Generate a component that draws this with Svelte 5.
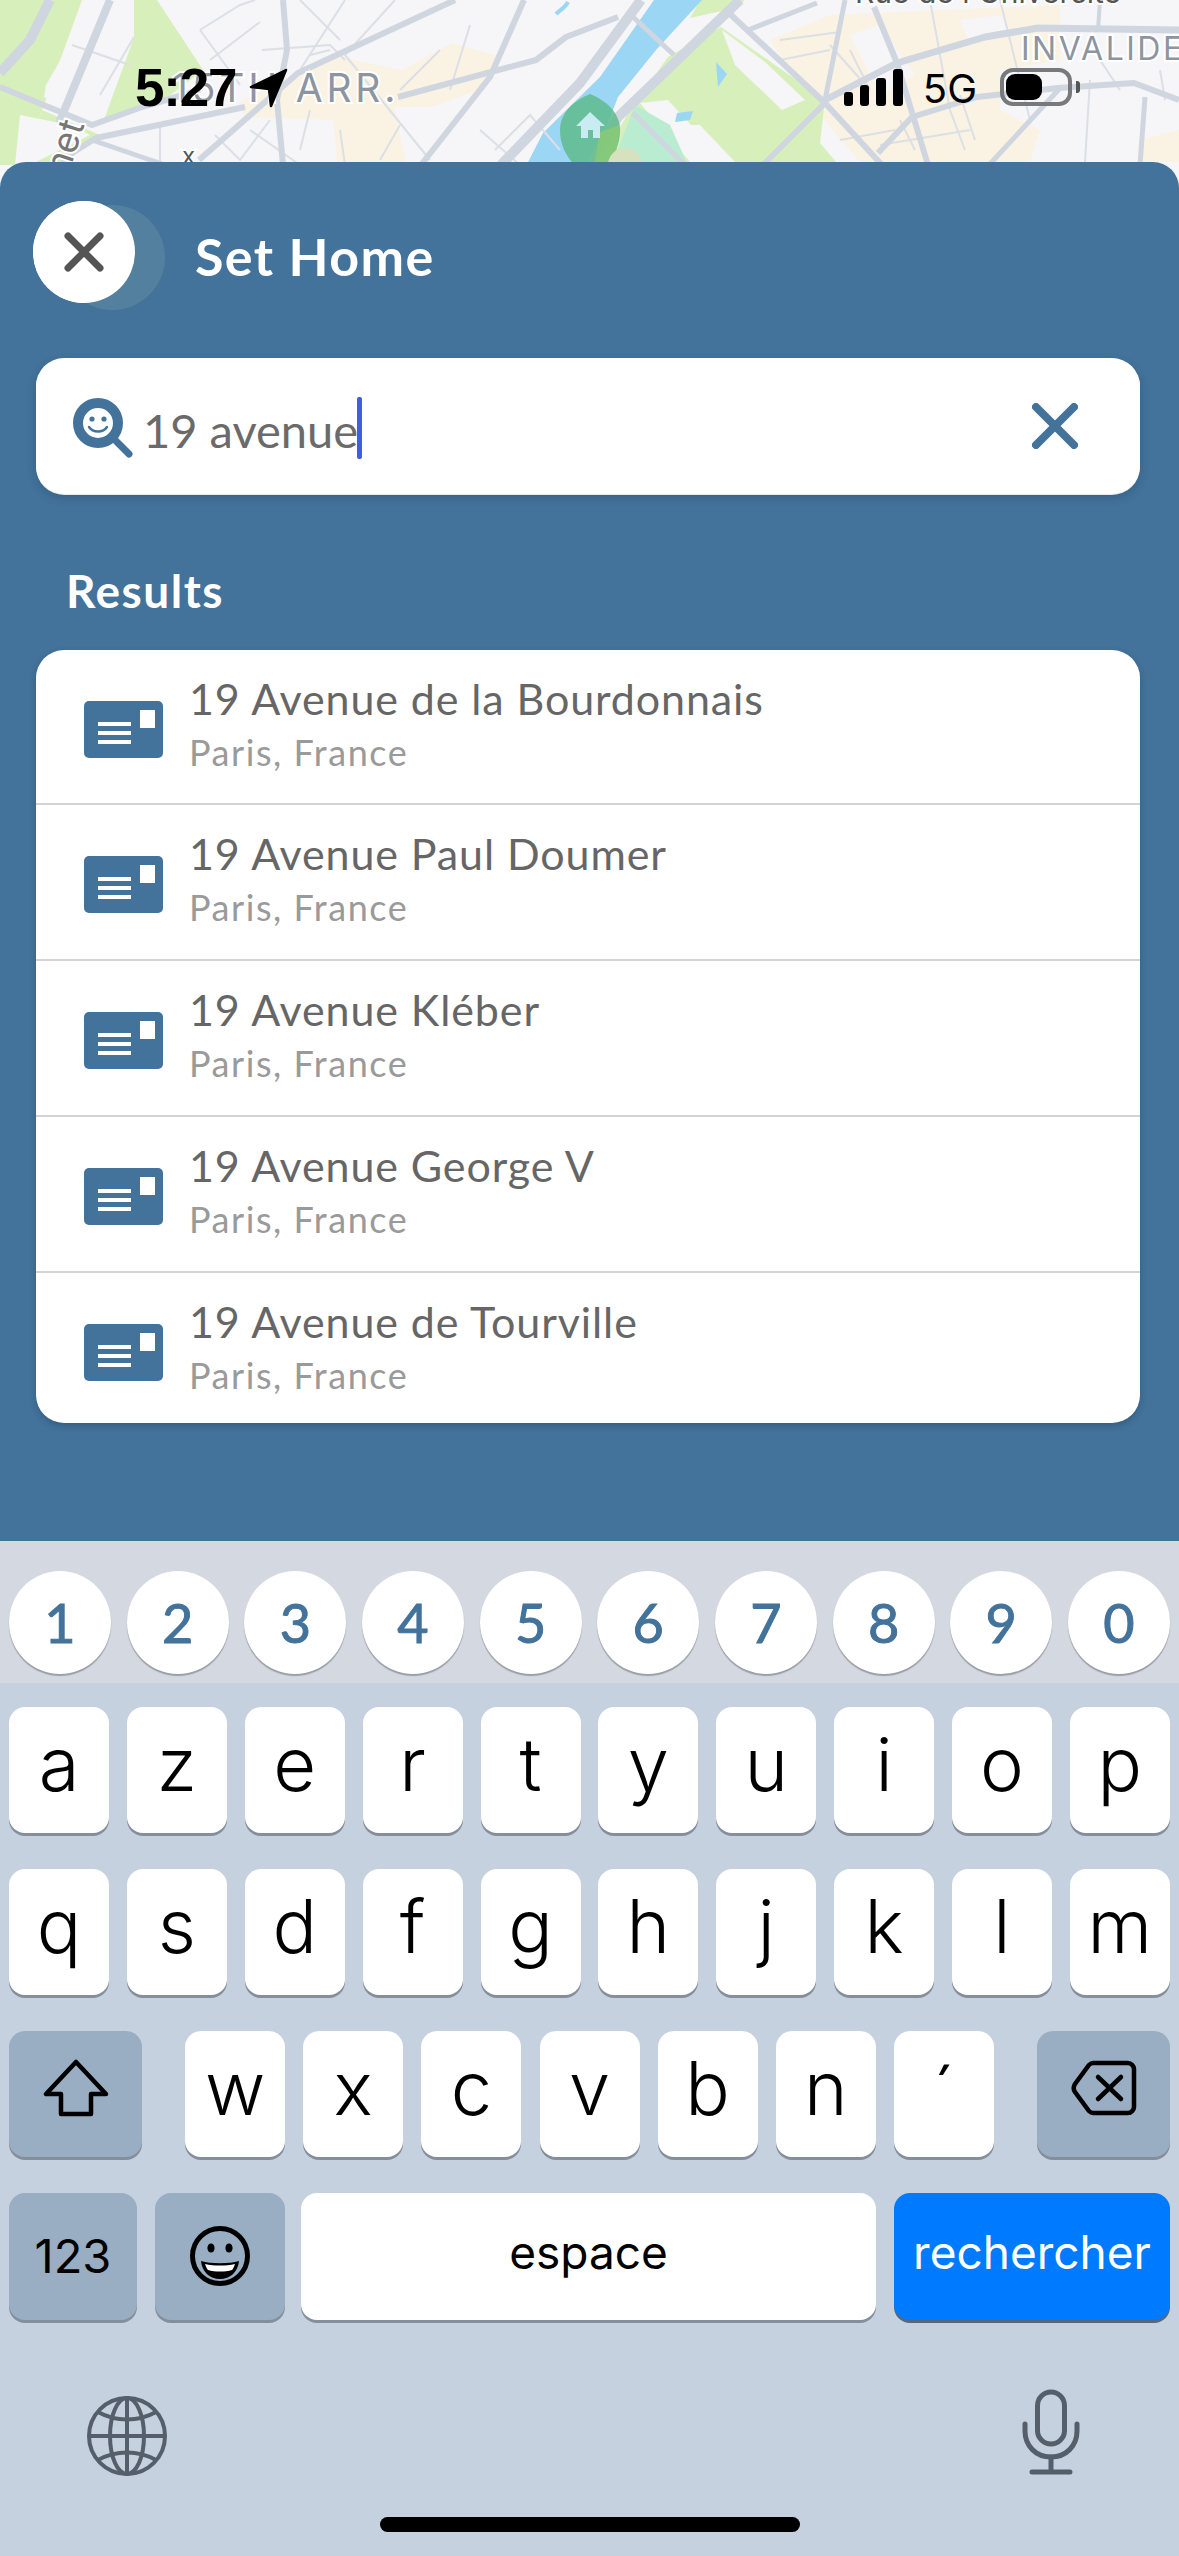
<script>
  const results = [
    '19 Avenue de la Bourdonnais',
    '19 Avenue Paul Doumer',
    '19 Avenue Kléber',
    '19 Avenue George V',
    '19 Avenue de Tourville'
  ];
  const digits = ['1','2','3','4','5','6','7','8','9','0'];
  const row1 = ['a','z','e','r','t','y','u','i','o','p'];
  const row2 = ['q','s','d','f','g','h','j','k','l','m'];
  const row3 = ['w','x','c','v','b','n'];
  const greens = [
    '0,0 82,0 42,110 20,165 0,165',
    '134,0 157,0 203,70 160,103 103,122 134,37',
    '42,110 100,135 62,165 20,165',
    '668,57 721,27 825,100 820,143 836,162 600,162 630,110',
    '700,0 745,0 735,8 690,18'
  ];
  const yellows = [
    '237,103 337,57 402,70 452,43 501,57 486,87 432,107 394,107 406,162 337,162 333,120 245,117',
    '770,40 830,15 1060,5 1060,60 1000,70 1000,110 1040,130 1030,162 860,162 820,115',
    '1140,140 1179,130 1179,162 1140,162'
  ];
  const whites = [
    '46,85 95,0 134,0 134,37 103,122 90,118 44,97',
    '722,30 765,62 805,100 782,110 735,65',
    '640,103 668,100 725,162 690,162',
    '680,125 700,125 735,162 710,162',
    '20,115 70,125 90,135 30,165 15,165',
    '850,35 880,25 915,75 880,95',
    '960,20 1000,15 1010,30 970,45'
  ];
  const majors = [
    ['M50 0L30 40L0 73', 10],
    ['M110 0L59 123', 8],
    ['M0 87L92 125L142 107L200 90', 6],
    ['M61 160L96 138L245 107', 6],
    ['M92 140L165 165', 5],
    ['M455 0L298 73L199 160', 6],
    ['M283 0L287 50L277 100L283 165', 6],
    ['M398 97L536 60L566 37L618 17', 6],
    ['M524 0L490 77L421 165', 6],
    ['M641 0L580 83L501 165', 10],
    ['M740 0L618 117L590 165', 10],
    ['M633 17L674 55', 5],
    ['M729 13L825 103L882 165', 6],
    ['M633 113L690 170', 5],
    ['M825 100L897 63L985 37L1038 28L1179 30', 7],
    ['M763 165L825 103', 6],
    ['M874 7L897 63L928 165', 6],
    ['M748 30L817 3', 5],
    ['M845 0L825 100', 5],
    ['M878 153L912 117L977 97L1058 88L1134 83L1179 100', 6],
    ['M989 165L1061 87', 5],
    ['M1145 97L1140 165', 5],
    ['M1100 0L1098 30M1205 0L1203 30', 4]
  ];
  const minors = [
    'M200 30L240 5L255 0M200 30L240 85M260 22L210 60',
    'M72 45L130 65M100 95L134 37',
    'M262 50L330 45L345 60M300 0L340 40M330 50L310 55',
    'M345 0L300 70M395 0L345 55L430 160M440 50L400 90M470 25L450 90',
    'M160 125L160 165M310 110L300 150M250 130L300 165',
    'M400 125L380 160M480 130L520 165M495 150L530 115L560 150M340 130L345 165',
    'M270 120L240 160L215 135',
    'M850 50L870 90L830 45M780 40L840 32M780 60L830 50',
    'M930 0L950 110L965 150M1000 0L1030 120M900 120L915 150M960 95L975 140',
    'M1090 80L1085 162M1100 60L1120 90M1160 70L1165 100',
    'M840 140L895 130M880 145L970 130'
  ];
</script>

<div class="screen">
  <svg class="map" viewBox="0 0 1179 170" width="1179" height="170" aria-hidden="true">
    <rect width="1179" height="170" fill="#f6f5f7" />
    {#each yellows as p}<polygon points={p} fill="#faf3e3" />{/each}
    {#each greens as p}<polygon points={p} fill="#d7f0bb" />{/each}
    {#each whites as p}<polygon points={p} fill="#f6f5f7" />{/each}
    <polygon points="654,0 702,0 656,50 618,97 590,170 524,170 543,133 600,77" fill="#9bd6f5" />
    <polygon points="635,105 670,125 690,170 610,170" fill="#b9ecd0" />
    <polygon points="716,62 727,74 718,87" fill="#9bd6f5" />
    <polygon points="677,113 693,111 690,120 675,122" fill="#9bd6f5" />
    <path d="M556 14C560 10 565 8 568 2" stroke="#9bd6f5" stroke-width="4" fill="none" />
    {#each minors as d}<path {d} fill="none" stroke="#dcdfe5" stroke-width="2" />{/each}
    {#each majors as [d, w]}<path {d} fill="none" stroke="#cfd6df" stroke-width={w} stroke-linejoin="round" />{/each}
    <path d="M590 94C575 100 560 112 560 130C560 145 566 155 574 165L606 165C614 155 620 145 620 130C620 112 605 100 590 94Z" fill="#5fbb8b" fill-opacity="0.85" />
    <polygon points="600,132 620,125 616,155 606,165 594,165" fill="#8ccb73" fill-opacity="0.75" />
    <circle cx="625" cy="165" r="17" fill="#d6e2bd" />
    <path d="M590 112L605 126L600 126L600 138L593 138L593 130L588 130L588 138L581 138L581 126L576 126Z" fill="#c8ecf2" />
    <text class="lbl arr" x="172" y="102">15TH ARR.</text>
    <text class="lbl inv" x="1021" y="60">INVALIDES</text>
    <text class="lbl rue" x="855" y="3">Rue de l'Université</text>
    <text class="lbl net" transform="translate(68 176) rotate(-72)">net</text>
    <text class="lbl x" x="182" y="164">x</text>
  </svg>

  <div class="status">
    <span class="time">5:27</span>
    <svg class="loc" viewBox="0 0 40 40" width="40" height="40" aria-hidden="true">
      <path d="M37 2L2 19L20 21L22 38Z" fill="#000" stroke="#000" stroke-width="2.5" stroke-linejoin="round" />
    </svg>
    <span class="spacer"></span>
    <svg class="signal" viewBox="0 0 60 37" width="60" height="37" aria-hidden="true">
      <rect x="0" y="23" width="9" height="14" rx="3" />
      <rect x="16" y="16" width="9" height="21" rx="3" />
      <rect x="32" y="9" width="10" height="28" rx="3" />
      <rect x="49" y="0" width="10" height="37" rx="3" />
    </svg>
    <span class="net5g">5G</span>
    <span class="battery"><span class="level"></span></span>
    <span class="nub"></span>
  </div>

  <section class="sheet">
    <header class="head">
      <span class="close">
        <svg viewBox="0 0 40 40" width="40" height="40" aria-hidden="true">
          <path d="M4 4L36 36M36 4L4 36" stroke="#555" stroke-width="7" stroke-linecap="round" />
        </svg>
      </span>
      <h1>Set Home</h1>
    </header>

    <div class="search">
      <svg class="find" viewBox="0 0 60 60" width="60" height="60" aria-hidden="true">
        <circle cx="25" cy="25" r="20" fill="#fff" stroke="#43729a" stroke-width="10" />
        <path d="M43 43L56 56" stroke="#43729a" stroke-width="7" stroke-linecap="round" />
        <circle cx="19" cy="21" r="2.6" fill="#43729a" />
        <circle cx="31" cy="21" r="2.6" fill="#43729a" />
        <path d="M16 29C20 35 30 35 34 29" fill="none" stroke="#43729a" stroke-width="2.4" stroke-linecap="round" />
      </svg>
      <span class="query">19 avenue</span><span class="caret"></span>
      <span class="grow"></span>
      <svg class="clear" viewBox="0 0 46 46" width="46" height="46" aria-hidden="true">
        <path d="M4 4L42 42M42 4L4 42" stroke="#43729a" stroke-width="8" stroke-linecap="round" />
      </svg>
    </div>

    <h2>Results</h2>

    <ul class="list">
      {#each results as r}
        <li class="row">
          <svg class="card" viewBox="0 0 79 57" width="79" height="57" aria-hidden="true">
            <rect width="79" height="57" rx="5" fill="#43729a" />
            <rect x="56" y="9" width="15" height="18" fill="#fff" />
            <rect x="14" y="21" width="33" height="4" fill="#fff" />
            <rect x="14" y="30" width="33" height="4" fill="#fff" />
            <rect x="14" y="39" width="33" height="4" fill="#fff" />
          </svg>
          <div class="txt">
            <div class="t">{r}</div>
            <div class="s">Paris, France</div>
          </div>
        </li>
      {/each}
    </ul>
  </section>

  <div class="numbar">
    {#each digits as d}<span class="num">{d}</span>{/each}
  </div>

  <div class="kbd">
    <div class="krow">
      {#each row1 as k}<span class="key">{k}</span>{/each}
    </div>
    <div class="krow">
      {#each row2 as k}<span class="key">{k}</span>{/each}
    </div>
    <div class="krow">
      <span class="key fn shift">
        <svg viewBox="0 0 66 58" width="66" height="58" aria-hidden="true">
          <path d="M33 3L3 35H18V55H48V35H63Z" fill="none" stroke="#000" stroke-width="4.5" stroke-linejoin="round" />
        </svg>
      </span>
      {#each row3 as k}<span class="key">{k}</span>{/each}
      <span class="key acute">´</span>
      <span class="key fn back">
        <svg viewBox="0 0 66 56" width="66" height="56" aria-hidden="true">
          <path d="M22 3H57C60 3 63 6 63 9V47C63 50 60 53 57 53H22C20 53 19 52 18 51L4 32C2 29 2 27 4 24L18 5C19 4 20 3 22 3Z" fill="none" stroke="#000" stroke-width="4.5" />
          <path d="M27 17L50 39M50 17L27 39" stroke="#000" stroke-width="4.5" stroke-linecap="round" />
        </svg>
      </span>
    </div>
    <div class="krow last">
      <span class="key fn n123">123</span>
      <span class="key fn emoji">
        <svg viewBox="0 0 62 62" width="62" height="62" aria-hidden="true">
          <circle cx="31" cy="31" r="27.5" fill="none" stroke="#000" stroke-width="5" />
          <ellipse cx="22" cy="23" rx="3.6" ry="4.6" />
          <ellipse cx="40" cy="23" rx="3.6" ry="4.6" />
          <path d="M12 36C22 39 40 39 50 36C49 47 41 54 31 54C21 54 13 47 12 36Z" />
          <path d="M16 39C25 41 37 41 46 39C45 42 44 44 43 45C36 47 26 47 19 45C18 44 17 42 16 39Z" fill="#fff" />
        </svg>
      </span>
      <span class="key space">espace</span>
      <span class="key go">rechercher</span>
    </div>
    <div class="extras">
      <svg class="globe" viewBox="0 0 82 82" width="82" height="82" aria-hidden="true">
        <g fill="none" stroke="#555f6b" stroke-width="4">
          <circle cx="41" cy="41" r="38" />
          <ellipse cx="41" cy="41" rx="17" ry="38" />
          <path d="M41 3V79M3 41H79" />
          <path d="M12 17C30 27 52 27 70 17M12 65C30 55 52 55 70 65" />
        </g>
      </svg>
      <svg class="mic" viewBox="0 0 58 86" width="58" height="86" aria-hidden="true">
        <g fill="none" stroke="#555f6b" stroke-width="5" stroke-linecap="round">
          <rect x="15.5" y="3" width="27" height="52" rx="13.5" />
          <path d="M3 35V42C3 57 14 68 29 68C44 68 55 57 55 42V35" />
          <path d="M29 68V82M10 83H48" />
        </g>
      </svg>
    </div>
    <div class="homebar"></div>
  </div>
</div>

<style>
  :global(body) { margin: 0; background: #f6f5f7; }
  .screen {
    position: relative;
    width: 1179px;
    height: 2556px;
    overflow: hidden;
    padding-top: 162px;
    box-sizing: border-box;
    font-family: "Liberation Sans", Arial, sans-serif;
  }
  .map { position: absolute; top: 0; left: 0; display: block; }
  .lbl { font-family: "Inter", "Liberation Sans", sans-serif; fill: #8d95a0; paint-order: stroke; stroke: #fff; stroke-width: 4px; }
  .arr { font-size: 39px; letter-spacing: 3.8px; }
  .inv { font-size: 32px; letter-spacing: 2.5px; }
  .rue { font-size: 30px; fill: #555; }
  .net { font-size: 36px; fill: #777; }
  .x { font-size: 24px; fill: #555; }

  .status {
    position: absolute;
    top: 68px;
    left: 135px;
    right: 99px;
    height: 40px;
    display: flex;
    align-items: flex-start;
  }
  .time { font-size: 53px; font-weight: 700; line-height: 40px; letter-spacing: -1.2px; color: #000; }
  .loc { margin-left: 13px; }
  .spacer { flex: 1; }
  .signal { margin-top: 1px; fill: #000; }
  .net5g { font-family: "Inter", sans-serif; font-size: 40px; line-height: 40px; margin: 1px 0 0 19px; color: #000; }
  .battery {
    margin-left: 23px;
    width: 72px;
    height: 38px;
    box-sizing: border-box;
    border: 4px solid #77797c;
    border-radius: 13px;
    padding: 2px;
  }
  .level { display: block; width: 36px; height: 26px; background: #000; border-radius: 9px; }
  .nub { width: 4px; height: 12px; margin: 13px 0 0 4px; background: #555; border-radius: 0 3px 3px 0; }

  .sheet {
    position: relative;
    height: 1379px;
    box-sizing: border-box;
    background: #43729a;
    border-radius: 26px 26px 0 0;
    padding: 39px 39px 0 36px;
    font-family: "Lato", "Liberation Sans", sans-serif;
  }
  .head { display: flex; align-items: center; height: 102px; }
  .close {
    position: relative;
    margin-left: -3px;
    width: 102px;
    height: 102px;
    border-radius: 50%;
    background: #fff;
    display: flex;
    align-items: center;
    justify-content: center;
  }
  .close::before {
    content: "";
    position: absolute;
    left: 27px;
    top: 4px;
    width: 105px;
    height: 105px;
    border-radius: 50%;
    background: #54809f;
  }
  .close::after {
    content: "";
    position: absolute;
    inset: 0;
    border-radius: 50%;
    background: #fff;
  }
  .close svg { position: relative; z-index: 1; }
  h1 { margin: 8px 0 0 60px; font-size: 52px; font-weight: 700; color: #fff; line-height: 60px; letter-spacing: 1.4px; }

  .search {
    margin-top: 55px;
    height: 136px;
    background: #fff;
    border-radius: 28px;
    box-shadow: 0 1px 0 #e4e8ec, 0 4px 8px rgba(20, 50, 80, 0.25);
    display: flex;
    align-items: flex-start;
    padding: 0 62px 0 37px;
    box-sizing: border-box;
  }
  .find { margin-top: 40px; flex: none; }
  .query { margin: 42px 0 0 10px; font-size: 47px; line-height: 60px; color: #6a6a6a; letter-spacing: 0; }
  .caret { margin: 39px 0 0 -1px; width: 5px; height: 62px; background: #3d5fe0; border-radius: 2px; }
  .grow { flex: 1; }
  .clear { margin-top: 45px; }

  h2 { margin: 71px 0 0 30px; font-size: 46px; font-weight: 700; color: #fff; line-height: 52px; letter-spacing: 1.5px; }

  .list {
    list-style: none;
    margin: 33px 0 0;
    padding: 0;
    background: #fff;
    border-radius: 28px;
    box-shadow: 0 3px 6px rgba(20, 50, 80, 0.3);
    overflow: hidden;
  }
  .row {
    height: 156px;
    box-sizing: border-box;
    border-bottom: 2px solid #d3d3d3;
    display: flex;
    align-items: flex-start;
    padding: 0 0 0 48px;
  }
  .row:first-child { height: 155px; }
  .row:last-child { height: 150px; border-bottom: 0; }
  .card { margin-top: 51px; flex: none; }
  .txt { margin: 24px 0 0 26px; }
  .t { font-size: 43px; line-height: 50px; color: #666; letter-spacing: 0.9px; }
  .s { margin-top: 6px; font-size: 36px; line-height: 44px; color: #9a9a9a; letter-spacing: 1.55px; }

  .numbar {
    position: relative;
    height: 142px;
    box-sizing: border-box;
    background: #d4d8e1;
    padding: 30px 9px 0;
    display: flex;
    justify-content: space-between;
  }
  .num {
    width: 102px;
    height: 103px;
    border-radius: 50%;
    background: #fff;
    box-shadow: 0 2px 1px #9a9ea6;
    display: flex;
    align-items: center;
    justify-content: center;
    font-family: "Lato", sans-serif;
    font-size: 54px;
    color: #43729a;
    -webkit-text-stroke: 1px #43729a;
    box-sizing: border-box;
  }

  .kbd {
    position: relative;
    height: 873px;
    background: #c5d1de;
    padding: 24px 9px 0;
    box-sizing: border-box;
  }
  .krow { display: flex; justify-content: space-between; height: 126px; margin-bottom: 36px; }
  .key {
    flex: none;
    width: 100px;
    height: 126px;
    background: #fff;
    border-radius: 16px;
    box-shadow: 0 3px 0 #858f9c;
    display: flex;
    align-items: center;
    justify-content: center;
    font-family: "Inter", "Liberation Sans", sans-serif;
    font-weight: 300;
    font-size: 74px;
    line-height: 1;
    color: #000;
    padding-bottom: 12px;
    box-sizing: border-box;
  }
  .acute { padding-bottom: 0; }
  .fn { background: #99adc3; }
  .shift { width: 133px; margin-right: 25px; }
  .back { width: 133px; margin-left: 25px; }
  .last { justify-content: flex-start; height: 127px; margin-bottom: 0; }
  .last .key { height: 127px; padding-bottom: 2px; font-size: 47px; font-weight: 400; }
  .n123 { width: 128px; }
  .emoji { width: 130px; margin-left: 18px; }
  .space { width: 575px; margin-left: 16px; }
  .go { width: 276px; margin-left: 18px; background: #007aff; color: #fff; box-shadow: 0 3px 0 #56677c; }
  .last .space, .last .go { padding-bottom: 10px; font-size: 46px; }

  .extras {
    display: flex;
    justify-content: space-between;
    align-items: flex-start;
    padding: 69px 90px 0 77px;
  }
  .globe { margin-top: 6px; }
  .homebar {
    position: absolute;
    left: 380px;
    top: 834px;
    width: 420px;
    height: 15px;
    border-radius: 8px;
    background: #000;
  }
</style>
